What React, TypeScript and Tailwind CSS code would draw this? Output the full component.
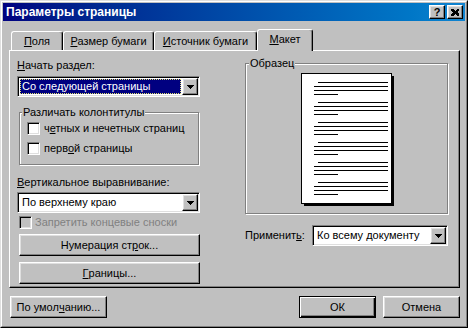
import React from 'react';

// Win98-style bevels
const raised =
  'border border-t-white border-l-white border-r-black border-b-black shadow-[inset_-1px_-1px_0_#808080,inset_1px_1px_0_#dfdfdf] bg-[#c0c0c0]';
const sunken =
  'border border-t-[#808080] border-l-[#808080] border-r-white border-b-white shadow-[inset_1px_1px_0_#000,inset_-1px_-1px_0_#dfdfdf] p-[1px]';
const etched = 'border border-[#808080] shadow-[1px_1px_0_#fff,inset_1px_1px_0_#fff]';

const Arrow = () => (
  <svg width="7" height="4" viewBox="0 0 7 4" shapeRendering="crispEdges">
    <rect x="0" y="0" width="7" height="1" fill="#000" />
    <rect x="1" y="1" width="5" height="1" fill="#000" />
    <rect x="2" y="2" width="3" height="1" fill="#000" />
    <rect x="3" y="3" width="1" height="1" fill="#000" />
  </svg>
);

const Combo = ({ value, selected, className = '' }: { value: string; selected?: boolean; className?: string }) => (
  <div className={`h-[21px] flex bg-white ${sunken} ${className}`}>
    <div className="flex-1 flex min-w-0">
      {selected ? (
        <div className="flex-1 m-[1px] flex items-center bg-[#000080] text-white border border-dotted border-[#e0e070] pl-[1px]">
          {value}
        </div>
      ) : (
        <div className="flex-1 flex items-center pl-[3px]">{value}</div>
      )}
    </div>
    <div className={`w-[16px] h-[17px] flex items-center justify-center ${raised}`}>
      <Arrow />
    </div>
  </div>
);

const CheckBox = ({ disabled }: { disabled?: boolean }) => (
  <div className={`w-[13px] h-[13px] shrink-0 ${sunken} ${disabled ? 'bg-[#c0c0c0]' : 'bg-white'}`} />
);

const Btn = ({ children, className = '', isDefault }: { children: React.ReactNode; className?: string; isDefault?: boolean }) => (
  <button
    type="button"
    className={
      isDefault
        ? `h-[22px] flex items-center justify-center bg-[#c0c0c0] border border-black shadow-[inset_1px_1px_0_#fff,inset_-1px_-1px_0_#000,inset_-2px_-2px_0_#808080] ${className}`
        : `h-[22px] flex items-center justify-center ${raised} ${className}`
    }
  >
    {children}
  </button>
);

const Tab = ({ children, width, active }: { children: React.ReactNode; width: string; active?: boolean }) => (
  <div
    className={`${width} ${
      active ? 'h-[22px] mb-[-1px] relative z-10 pt-[3px]' : 'h-[19px] pt-[3px]'
    } flex justify-center bg-[#c0c0c0] border-t border-l border-r border-t-white border-l-white border-r-black rounded-tl-[3px] rounded-tr-[3px] shadow-[inset_-1px_0_0_#808080]`}
  >
    {children}
  </div>
);

// образец страницы: 6 абзацев по 4 строки
const PagePreview = () => (
  <svg width="93" height="133" viewBox="0 0 93 133" shapeRendering="crispEdges">
    <rect x="0.5" y="0.5" width="90" height="130" fill="#fff" stroke="#000" />
    <rect x="91" y="3" width="2" height="130" fill="#000" />
    <rect x="3" y="131" width="90" height="2" fill="#000" />
    {[0, 1, 2, 3, 4, 5].map((i) => {
      const y = 9 + i * 20;
      return (
        <g key={i} fill="#000">
          <rect x="17" y={y} width="70" height="1" />
          <rect x="13" y={y + 4} width="74" height="1" />
          <rect x="13" y={y + 8} width="74" height="1" />
          <rect x="13" y={y + 12} width="24" height="1" />
        </g>
      );
    })}
  </svg>
);

export default function App() {
  return (
    <div className="w-[468px] h-[328px] border border-t-[#dfdfdf] border-l-[#dfdfdf] border-r-black border-b-black font-['Liberation_Sans',Arial,sans-serif] text-[11px] leading-[13px] text-black select-none">
      <div className="h-full flex flex-col bg-[#c0c0c0] border border-t-white border-l-white border-r-[#808080] border-b-[#808080] p-[1px]">
        {/* заголовок окна */}
        <div className="h-[18px] shrink-0 flex items-center justify-between bg-linear-to-r from-[#000080] to-[#1084d0] pl-[3px] pr-[2px]">
          <span className="text-white font-bold text-[12px]">Параметры страницы</span>
          <div className="flex gap-[2px]">
            <div className={`w-[16px] h-[14px] flex items-center justify-center font-bold text-[11px] leading-[11px] ${raised}`}>?</div>
            <div className={`w-[16px] h-[14px] flex items-center justify-center ${raised}`}>
              <svg width="8" height="7" viewBox="0 0 8 7" shapeRendering="crispEdges">
                <path d="M0 0h2l2 2 2-2h2v1l-2 2 2 2v2H6L4 5 2 7H0V6l2-2.5L0 1z" fill="#000" />
              </svg>
            </div>
          </div>
        </div>

        <div className="flex flex-col pl-[6px] pr-[5px] pt-[8px]">
          {/* вкладки */}
          <div className="h-[21px] flex items-end pl-[2px]">
            <Tab width="w-[52px]">
              <span><u>П</u>оля</span>
            </Tab>
            <Tab width="w-[91px]">
              <span><u>Р</u>азмер бумаги</span>
            </Tab>
            <Tab width="w-[103px]">
              <span><u>И</u>сточник бумаги</span>
            </Tab>
            <Tab width="w-[56px]" active>
              <span><u>М</u>акет</span>
            </Tab>
          </div>

          {/* панель вкладки */}
          <div className="h-[238px] flex border-t border-l border-r border-b border-t-white border-l-white border-r-black border-b-black shadow-[inset_-1px_-1px_0_#808080] pl-[7px]">
            <div className="w-[183px] flex flex-col">
              <div className="mt-[8px] h-[13px]"><u>Н</u>ачать раздел:</div>
              <Combo className="mt-[4px]" value="Со следующей страницы" selected />

              <div className={`relative mt-[15px] ml-[2px] w-[180px] h-[53px] pt-[9px] pl-[7px] flex flex-col gap-[7px] ${etched}`}>
                <span className="absolute left-[2px] -top-[7px] px-[1px] bg-[#c0c0c0]">Различать колонтитулы</span>
                <div className="flex items-center gap-[4px] h-[13px]">
                  <CheckBox />
                  <span>ч<u>е</u>тных и нечетных страниц</span>
                </div>
                <div className="flex items-center gap-[4px] h-[13px]">
                  <CheckBox />
                  <span>перв<u>о</u>й страницы</span>
                </div>
              </div>

              <div className="mt-[11px] h-[13px]"><u>В</u>ертикальное выравнивание:</div>
              <Combo className="mt-[3px]" value="По верхнему краю" />

              <div className="mt-[3px] ml-[2px] flex items-center gap-[3px] h-[13px] text-[#808080]">
                <CheckBox disabled />
                <span>Запретить концевые сноски</span>
              </div>

              <Btn className="mt-[5px] ml-[2px] w-[181px]">Нумерация ст<u>р</u>ок...</Btn>
              <Btn className="mt-[6px] ml-[2px] w-[181px]"><u>Г</u>раницы...</Btn>
            </div>

            <div className="ml-[45px] w-[203px] flex flex-col">
              <div className={`relative mt-[12px] h-[151px] pt-[9px] flex justify-center ${etched}`}>
                <span className="absolute left-[3px] -top-[7px] px-[1px] bg-[#c0c0c0]">Образец</span>
                <div className="pl-[1px]">
                  <PagePreview />
                </div>
              </div>
              <div className="mt-[11px] flex items-center justify-between">
                <span>Применит<u>ь</u>:</span>
                <Combo className="w-[136px]" value="Ко всему документу" />
              </div>
            </div>
          </div>

          {/* кнопки диалога */}
          <div className="mt-[8px] flex items-center">
            <Btn className="ml-[1px] w-[97px]">По умол<u>ч</u>анию...</Btn>
            <div className="flex-1" />
            <Btn className="w-[77px]" isDefault>ОК</Btn>
            <Btn className="ml-[7px] w-[77px]">Отмена</Btn>
          </div>
        </div>
      </div>
    </div>
  );
}
